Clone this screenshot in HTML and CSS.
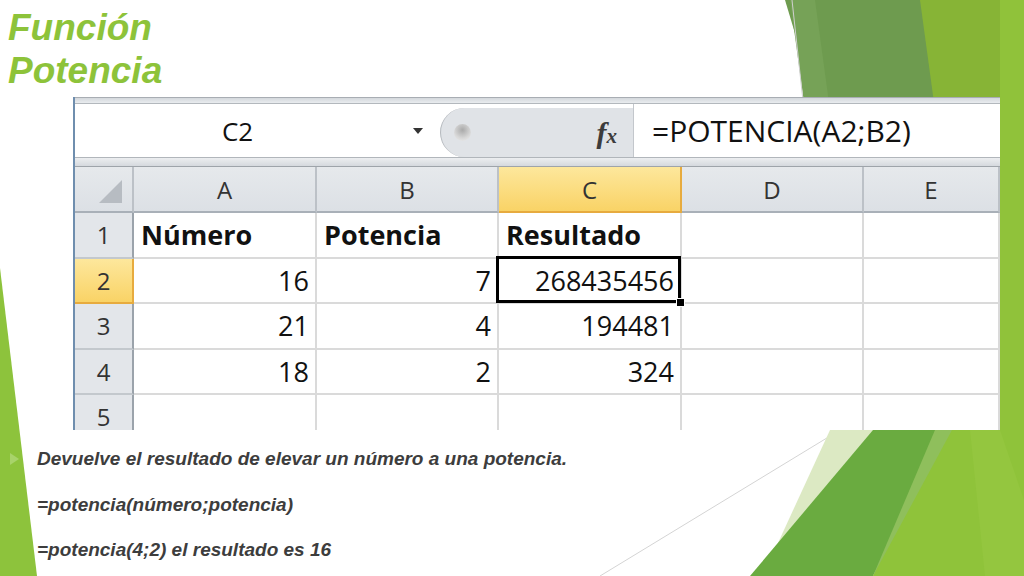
FILE: index.html
```
<html>
<head>
<meta charset="utf-8">
<link rel="stylesheet" href="styles.css">
</head>
<body>

<div class="slide">
	<svg class="deco" width="1024" height="576" viewBox="0 0 1024 576">
		<polygon points="785,0 935,0 945,110 818,110" fill="#6e9b4f"/>
		<polygon points="790,0 815,0 830,110 805,110" fill="#76a257"/>
		<polygon points="920,0 1000,0 1000,110 935,110" fill="#87b436"/>
		<line x1="792" y1="0" x2="804" y2="110" stroke="#cfcfcf" stroke-width="1"/>
		<polygon points="1000,0 1024,0 1024,576 1000,576" fill="#90c23a"/>
		<polygon points="0,268 37,576 0,576" fill="#8dc33c"/>
		<line x1="840" y1="430" x2="600" y2="576" stroke="#d4d4d4" stroke-width="1"/>
		<polygon points="830,430 875,430 772,556" fill="#dce9c3"/>
		<polygon points="873,430 952,430 873,576 750,576" fill="#6aab40"/>
		<polygon points="935,430 955,430 880,576 873,576" fill="#8fbf5c"/>
		<polygon points="952,430 1024,430 1024,576 873,576" fill="#8fc33a"/>
		<polygon points="970,430 1000,430 1024,500 1024,576 985,576" fill="#94c63f"/>
	</svg>

	<div class="content">
		<h1 class="title">
			<div class="title-line">Función</div>
			<div class="title-line">Potencia</div>
		</h1>

		<div class="sheet">
			<div class="sheet-top"></div>
			<div class="formula-bar">
				<div class="name-box">
					<span class="name">C2</span>
					<span class="dropdown"></span>
				</div>
				<div class="fx-area">
					<span class="knob"></span>
					<span class="fx">f<span class="fx-x">x</span></span>
				</div>
				<div class="formula">=POTENCIA(A2;B2)</div>
			</div>
			<div class="sheet-gap"></div>

			<div class="grid">
				<div class="hd corner"><span class="corner-mark"></span></div>
				<div class="hd">A</div>
				<div class="hd">B</div>
				<div class="hd on">C</div>
				<div class="hd">D</div>
				<div class="hd">E</div>

				<div class="rh">1</div>
				<div class="cell bold">Número</div>
				<div class="cell bold">Potencia</div>
				<div class="cell bold">Resultado</div>
				<div class="cell"></div>
				<div class="cell"></div>

				<div class="rh on">2</div>
				<div class="cell num">16</div>
				<div class="cell num">7</div>
				<div class="cell num sel">268435456</div>
				<div class="cell"></div>
				<div class="cell"></div>

				<div class="rh">3</div>
				<div class="cell num">21</div>
				<div class="cell num">4</div>
				<div class="cell num">194481</div>
				<div class="cell"></div>
				<div class="cell"></div>

				<div class="rh">4</div>
				<div class="cell num">18</div>
				<div class="cell num">2</div>
				<div class="cell num">324</div>
				<div class="cell"></div>
				<div class="cell"></div>

				<div class="rh">5</div>
				<div class="cell"></div>
				<div class="cell"></div>
				<div class="cell"></div>
				<div class="cell"></div>
				<div class="cell"></div>
			</div>
		</div>

		<ul class="notes">
			<li class="bullet">Devuelve el resultado de elevar un número a una potencia.</li>
			<li>=potencia(número;potencia)</li>
			<li>=potencia(4;2) el resultado es 16</li>
		</ul>
	</div>
</div>

</body>
</html>
```

FILE: styles.css
```
body {
	margin: 0;
	background: #ffffff;
}

.slide {
	position: relative;
	width: 1024px;
	height: 576px;
	overflow: hidden;
	background: #ffffff;
}

.deco {
	position: absolute;
	top: 0;
	left: 0;
	z-index: 0;
}

.content {
	position: relative;
	z-index: 1;
}

.title {
	margin: 6px 0 0 8px;
	height: 86px;
	font-family: "Liberation Sans", Arial, sans-serif;
	font-style: italic;
	font-weight: 700;
	font-size: 37px;
	color: #8dc33a;
}

.title-line {
	height: 43px;
	line-height: 43px;
}

/* excel picture */
.sheet {
	margin: 5px 0 0 73px;
	width: 927px;
	height: 333px;
	overflow: hidden;
	background: #ffffff;
	border-left: 2px solid #6f8eae;
	box-sizing: border-box;
	font-family: "Open Sans", "Liberation Sans", sans-serif;
	color: #111111;
}

.sheet-top {
	height: 7px;
	box-sizing: border-box;
	border-top: 1px solid #a8adb3;
	border-bottom: 1px solid #b3b8bd;
	background: linear-gradient(#d4d8dc, #e9ecef);
}

.formula-bar {
	display: flex;
	height: 53px;
}

.name-box {
	width: 365px;
	display: flex;
	align-items: center;
	background: #ffffff;
}

.name {
	width: 325px;
	text-align: center;
	font-size: 26px;
}

.dropdown {
	margin-left: 13px;
	width: 0;
	height: 0;
	border-left: 5px solid transparent;
	border-right: 5px solid transparent;
	border-top: 6px solid #333333;
}

.fx-area {
	width: 193px;
	margin-top: 4px;
	display: flex;
	align-items: center;
	background: #e0e3e7;
	border-left: 1px solid #b5b9be;
	border-radius: 26px 0 0 26px;
	box-sizing: border-box;
}

.knob {
	width: 17px;
	height: 17px;
	margin-left: 13px;
	border-radius: 50%;
	background: radial-gradient(circle at 50% 35%, #a9a9a9, #d8d8d8 60%, #eeeeee);
}

.fx {
	margin-left: auto;
	margin-right: 16px;
	font-family: "Liberation Serif", serif;
	font-style: italic;
	font-weight: 700;
	font-size: 30px;
	color: #3c3c3c;
}

.fx-x {
	font-size: 21px;
}

.formula {
	flex: 1;
	display: flex;
	align-items: center;
	padding-left: 18px;
	background: #ffffff;
	border-left: 1px solid #c3c7cc;
	font-size: 30px;
}

.sheet-gap {
	height: 10px;
	box-sizing: border-box;
	border-top: 1px solid #b1b6bb;
	border-bottom: 1px solid #9ea4aa;
	background: linear-gradient(#eceef0, #d5d9de);
}

.grid {
	display: grid;
	grid-template-columns: 59px 183px 182px 183px 182px 1fr;
	grid-template-rows: 46px repeat(5, 45.5px);
}

.grid > div {
	display: flex;
	align-items: center;
	box-sizing: border-box;
}

.cell {
	padding: 0 6px;
	border-right: 2px solid #dadada;
	border-bottom: 2px solid #dadada;
	font-size: 27px;
}

.cell.num {
	justify-content: flex-end;
}

.cell.bold {
	font-weight: 700;
	padding-left: 7px;
}

.hd {
	justify-content: center;
	background: linear-gradient(#e6e9ec, #dce0e5);
	border-right: 2px solid #bcc1c7;
	border-bottom: 2px solid #a9b0b8;
	font-size: 24px;
	color: #333333;
}

.rh {
	justify-content: center;
	background: #e3e6ea;
	border-right: 2px solid #9ba3ab;
	border-bottom: 2px solid #c3c8cd;
	font-size: 24px;
	color: #333333;
}

.hd.on, .rh.on {
	background: linear-gradient(#fde79c, #f9d366);
	border-color: #e7ab3e;
}

.corner {
	position: relative;
}

.corner-mark {
	position: absolute;
	right: 10px;
	bottom: 8px;
	width: 0;
	height: 0;
	border-left: 23px solid transparent;
	border-bottom: 23px solid #b7bcc2;
}

.sel {
	position: relative;
}

.sel:after {
	content: "";
	position: absolute;
	top: -3px;
	left: -3px;
	right: -1px;
	bottom: -1px;
	border: 3px solid #000000;
}

.sel:before {
	content: "";
	position: absolute;
	right: -5px;
	bottom: -5px;
	width: 7px;
	height: 7px;
	background: #000000;
	border: 1px solid #ffffff;
	z-index: 2;
}

/* text below picture */
.notes {
	list-style: none;
	margin: 6px 0 0 0;
	padding-left: 37px;
	font-family: "Liberation Sans", Arial, sans-serif;
	font-style: italic;
	font-weight: 700;
	font-size: 19px;
	color: #3d3d3d;
}

.notes li {
	position: relative;
	line-height: 45.5px;
}

.notes li.bullet:before {
	content: "";
	position: absolute;
	left: -27px;
	top: 50%;
	transform: translateY(-50%);
	width: 0;
	height: 0;
	border-left: 9px solid #a8d36a;
	border-top: 6px solid transparent;
	border-bottom: 6px solid transparent;
}
```
